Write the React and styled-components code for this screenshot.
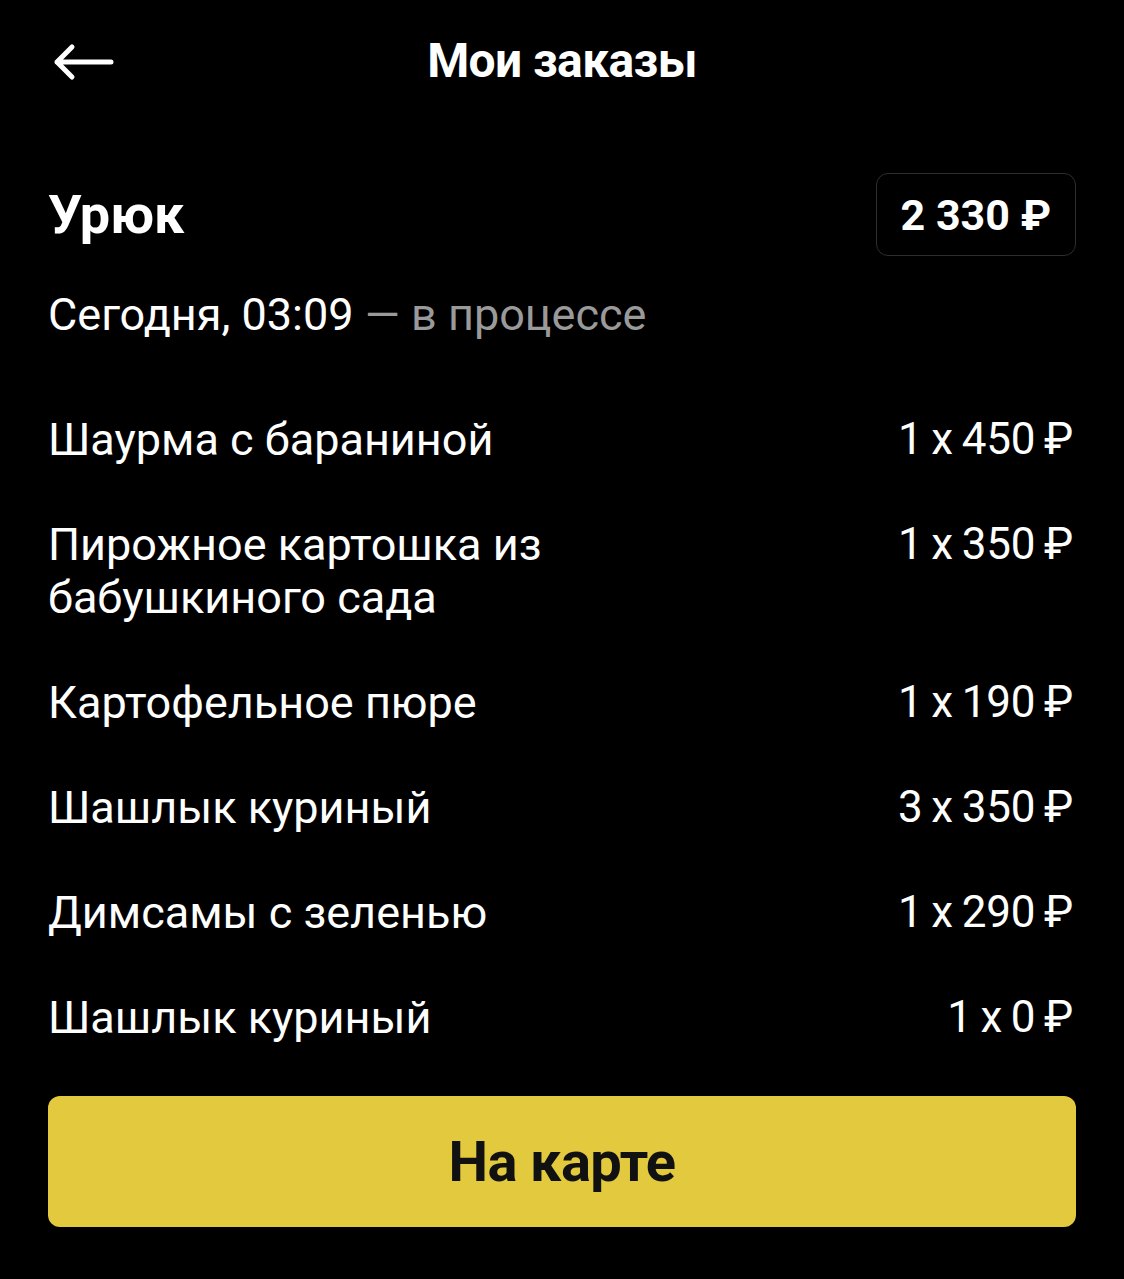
import React from 'react';
import styled, { createGlobalStyle } from 'styled-components';

const GlobalStyle = createGlobalStyle`
  html, body {
    margin: 0;
    padding: 0;
    background: #000;
  }
  body {
    font-family: Roboto, "Noto Sans", sans-serif;
    color: #fff;
  }
`;

const Page = styled.div`
  width: 1124px;
  min-height: 1279px;
  background: #000;
  box-sizing: border-box;
  padding: 0 48px;
`;

const TopBar = styled.div`
  position: relative;
  height: 120px;
  display: flex;
  align-items: center;
  justify-content: center;
`;

const BackButton = styled.button`
  position: absolute;
  left: 5px;
  top: 34px;
  width: 70px;
  height: 56px;
  border: 0;
  padding: 0;
  background: transparent;
  display: flex;
  align-items: center;
  cursor: pointer;
`;

const PageTitle = styled.h1`
  margin: 0;
  font-size: 48px;
  font-weight: 700;
  letter-spacing: -0.6px;
`;

const OrderHead = styled.div`
  display: flex;
  justify-content: space-between;
  align-items: center;
  margin-top: 53px;
`;

const Restaurant = styled.h2`
  margin: 0;
  font-size: 54px;
  font-weight: 700;
  letter-spacing: 0;
`;

const TotalBadge = styled.div`
  height: 83px;
  box-sizing: border-box;
  padding: 0 24px;
  border: 1px solid #2e2e2e;
  border-radius: 12px;
  display: flex;
  align-items: center;
  font-size: 43px;
  font-weight: 700;
`;

const Status = styled.div`
  margin-top: 32px;
  font-size: 45px;
  line-height: 53px;
  font-weight: 400;
  letter-spacing: 0;
`;

const Muted = styled.span`
  color: #9a9a9a;
`;

const Items = styled.div`
  margin-top: 72px;
  display: flex;
  flex-direction: column;
  gap: 52px;
`;

const Item = styled.div`
  display: flex;
  justify-content: space-between;
  align-items: flex-start;
  font-size: 45px;
  line-height: 53px;
  letter-spacing: 0;
`;

const ItemName = styled.div`
  max-width: 560px;
`;

const ItemPrice = styled.div`
  white-space: nowrap;
  padding-right: 3px;
  font-size: 44px;
  letter-spacing: -0.2px;
  word-spacing: -2px;
`;

const MapButton = styled.button`
  margin-top: 52px;
  width: 100%;
  height: 131px;
  border: 0;
  border-radius: 12px;
  background: #e3c93d;
  color: #111;
  font-family: inherit;
  font-size: 56px;
  font-weight: 700;
  letter-spacing: -0.6px;
  cursor: pointer;
`;

const items = [
  { name: 'Шаурма с бараниной', price: '1 x 450 ₽' },
  { name: 'Пирожное картошка из бабушкиного сада', price: '1 x 350 ₽' },
  { name: 'Картофельное пюре', price: '1 x 190 ₽' },
  { name: 'Шашлык куриный', price: '3 x 350 ₽' },
  { name: 'Димсамы с зеленью', price: '1 x 290 ₽' },
  { name: 'Шашлык куриный', price: '1 x 0 ₽' },
];

const App = () => (
  <>
    <GlobalStyle />
    <Page>
      <TopBar>
        <BackButton aria-label="Назад">
          <svg width="62" height="40" viewBox="0 0 62 40" fill="none">
            <path
              d="M58 20H4M19 5L4 20L19 35"
              stroke="#fff"
              strokeWidth="5"
              strokeLinecap="round"
              strokeLinejoin="round"
            />
          </svg>
        </BackButton>
        <PageTitle>Мои заказы</PageTitle>
      </TopBar>

      <OrderHead>
        <Restaurant>Урюк</Restaurant>
        <TotalBadge>2 330 ₽</TotalBadge>
      </OrderHead>

      <Status>
        Сегодня, 03:09 <Muted>— в процессе</Muted>
      </Status>

      <Items>
        {items.map((item, i) => (
          <Item key={i}>
            <ItemName>{item.name}</ItemName>
            <ItemPrice>{item.price}</ItemPrice>
          </Item>
        ))}
      </Items>

      <MapButton>На карте</MapButton>
    </Page>
  </>
);

export default App;
